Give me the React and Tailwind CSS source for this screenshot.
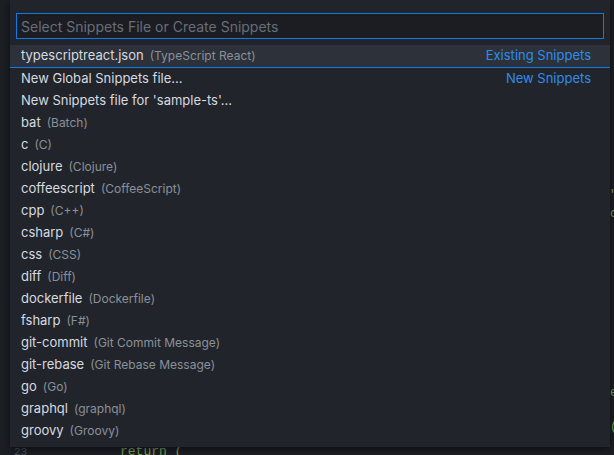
import React from "react";

const items = [
  ["bat", "Batch"],
  ["c", "C"],
  ["clojure", "Clojure"],
  ["coffeescript", "CoffeeScript"],
  ["cpp", "C++"],
  ["csharp", "C#"],
  ["css", "CSS"],
  ["diff", "Diff"],
  ["dockerfile", "Dockerfile"],
  ["fsharp", "F#"],
  ["git-commit", "Git Commit Message"],
  ["git-rebase", "Git Rebase Message"],
  ["go", "Go"],
  ["graphql", "graphql"],
  ["groovy", "Groovy"],
];

function Row({ label, desc, right, selected }) {
  return (
    <div
      className={
        "flex items-center pl-[11px] pr-[19px] " +
        (selected ? "h-[23px] bg-[#2c313a] border-b border-[#0e7ae6]" : "h-[22px]")
      }
    >
      <span className="text-[13px] text-[#d7dae0]">{label}</span>
      {desc && <span className="ml-[6px] text-[12px] text-[#8b9099]">({desc})</span>}
      {right && <span className="ml-auto text-[13px] text-[#2f8cec]">{right}</span>}
    </div>
  );
}

export default function App() {
  return (
    <div
      className="w-[614px] h-[455px] bg-[#1c1f24] relative overflow-hidden flex"
      style={{ fontFamily: "Inter, 'Noto Sans', sans-serif" }}
    >
      {/* editor text peeking out behind the palette */}
      <div className="absolute top-[-6px] left-[220px] text-[11px] text-[#9da5b4]">typescriptreact.json — sample-ts</div>
      <div className="absolute left-[120px] top-[442px] text-[13px] text-[#7fa35c] font-mono">return (</div>
      <div className="absolute left-[14px] top-[444px] text-[11px] text-[#4b5263] font-mono">23</div>
      <div className="absolute left-[610px] top-[186px] text-[12px] text-[#7fa35c] font-mono">"</div>
      <div className="absolute left-[610px] top-[205px] text-[12px] text-[#7fa35c] font-mono">c</div>
      <div className="absolute left-[610px] top-[384px] text-[12px] text-[#7fa35c] font-mono">e</div>
      <div className="absolute left-[610px] top-[418px] text-[12px] text-[#7fa35c] font-mono">(</div>

      <div className="relative z-10 ml-[10px] w-[600px] h-[447px] bg-[#21252b] shadow-[0_2px_8px_rgba(0,0,0,0.6)] pt-[13px] flex flex-col gap-[6px]">
        <div className="mx-[6px] h-[26px] border border-[#0e7ae6] bg-[#1b1d23] flex items-center px-[4px]">
          <span className="text-[14px] text-[#686e79]">Select Snippets File or Create Snippets</span>
        </div>
        <div className="flex flex-col">
          <Row label="typescriptreact.json" desc="TypeScript React" right="Existing Snippets" selected />
          <Row label="New Global Snippets file..." right="New Snippets" />
          <Row label="New Snippets file for 'sample-ts'..." />
          {items.map(([l, d]) => (
            <Row key={l} label={l} desc={d} />
          ))}
        </div>
      </div>
    </div>
  );
}
